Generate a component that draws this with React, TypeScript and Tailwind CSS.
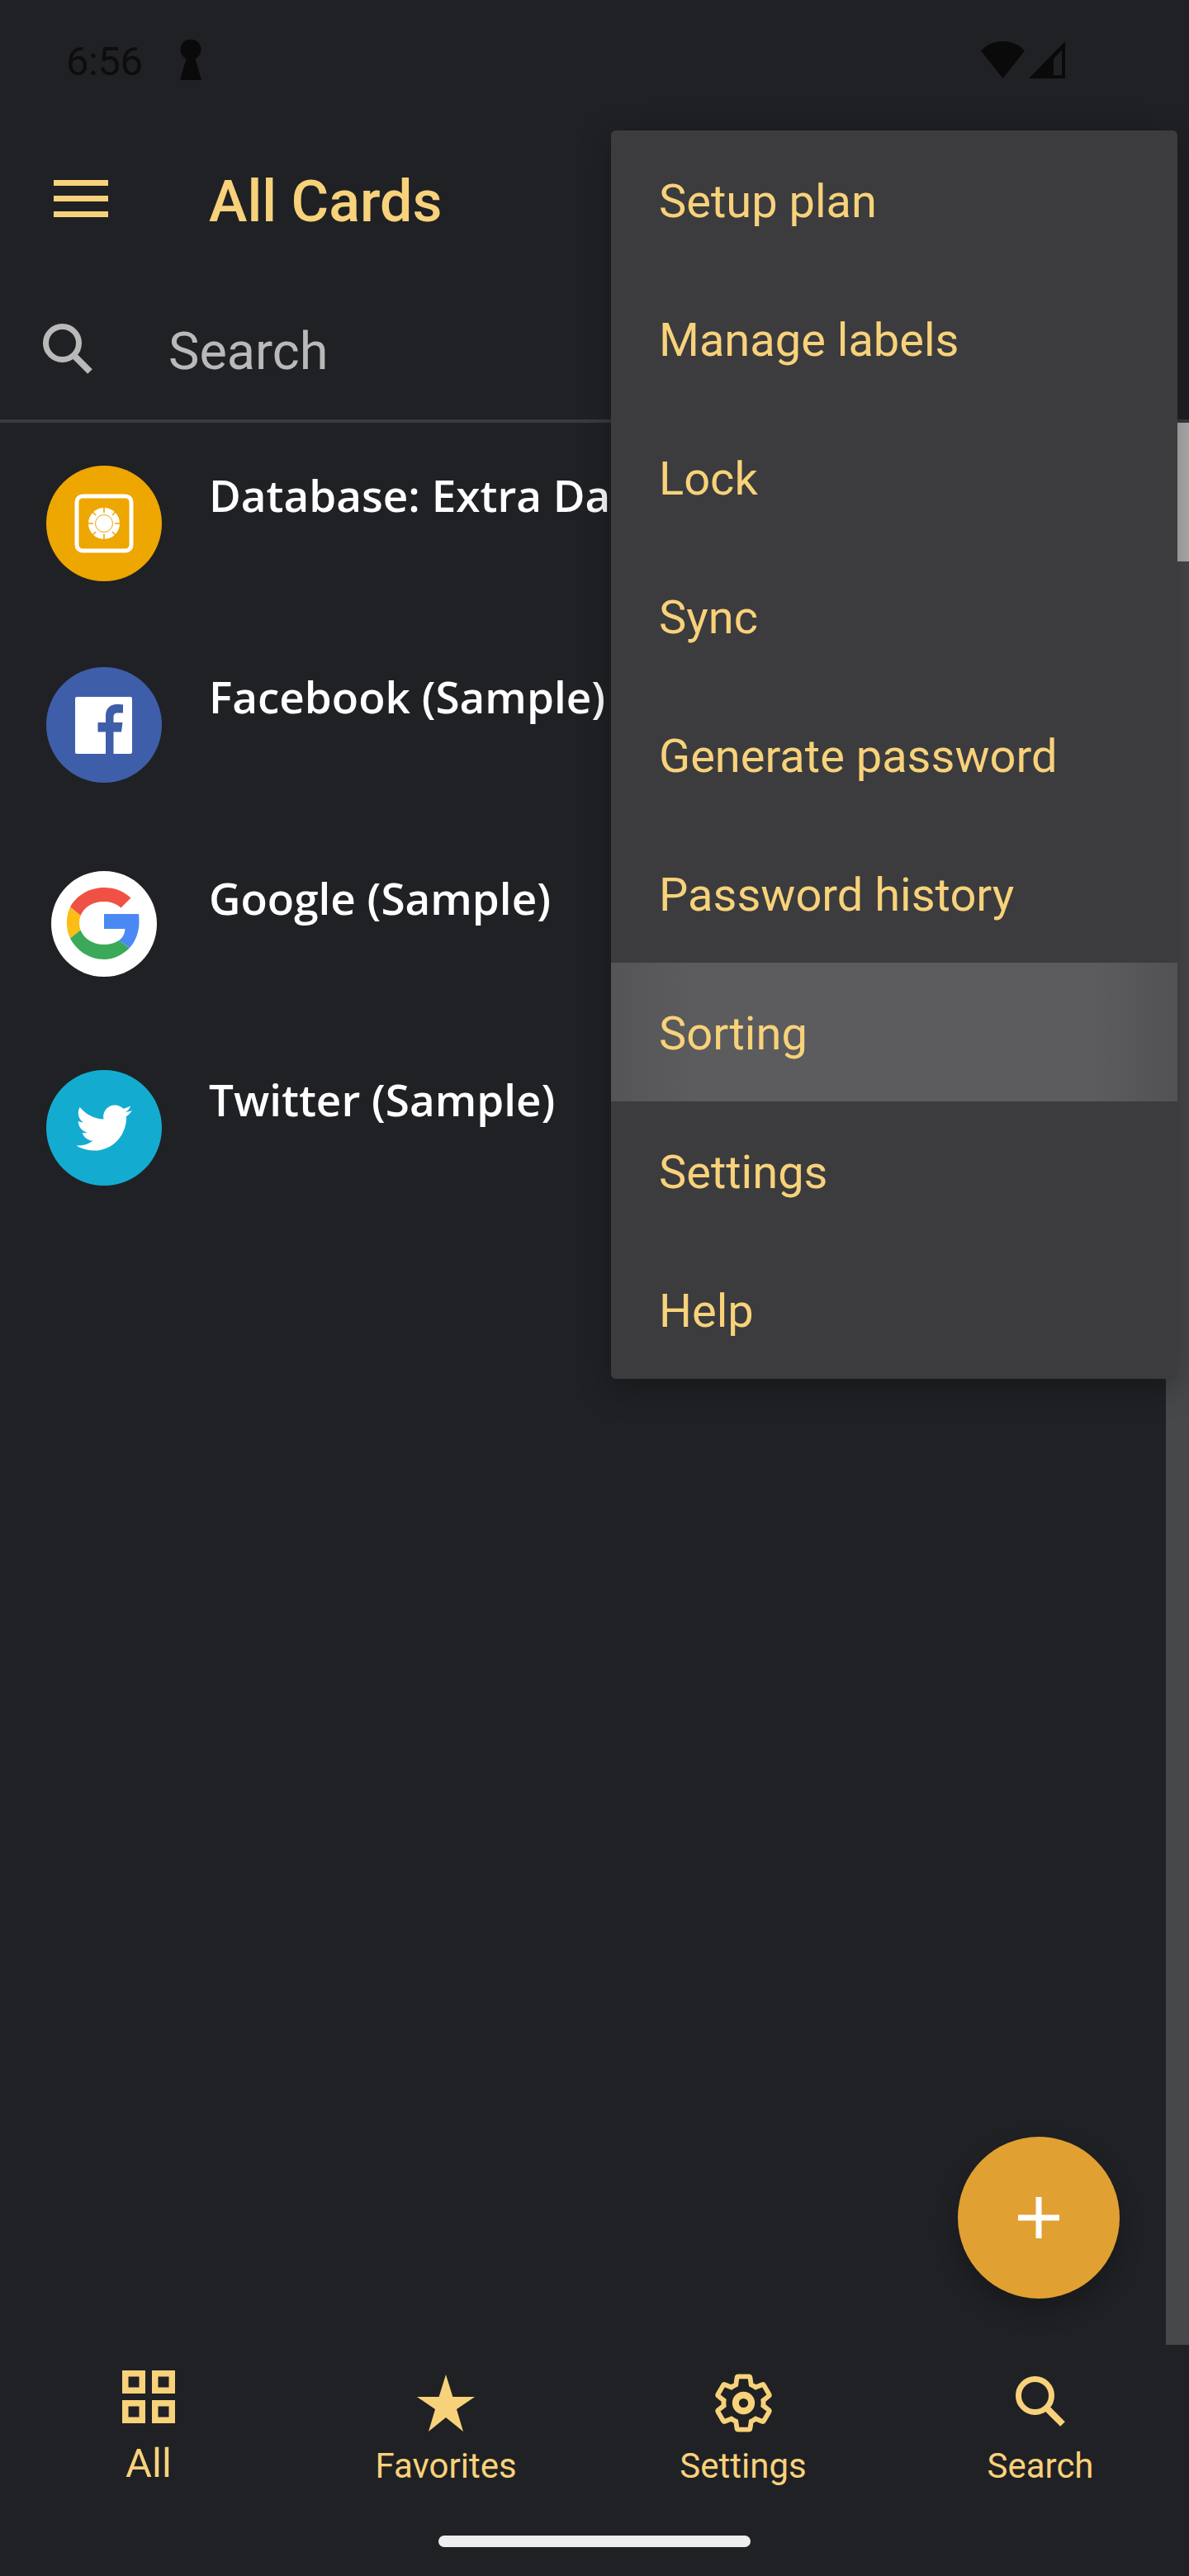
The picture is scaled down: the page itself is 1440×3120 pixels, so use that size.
import React from 'react';
import { FaTwitter } from 'react-icons/fa';

const GOLD = '#f8d27a';

const MENU_ITEMS = [
  'Setup plan',
  'Manage labels',
  'Lock',
  'Sync',
  'Generate password',
  'Password history',
  'Sorting',
  'Settings',
  'Help',
];

function SearchGlyph({ color, className }: { color: string; className: string }) {
  return (
    <svg viewBox="0 0 61 61" className={className} fill="none" stroke={color}>
      <circle cx="23.5" cy="23.5" r="20" strokeWidth="7" />
      <path d="M37 38 L57 58" strokeWidth="8" />
    </svg>
  );
}

function VaultIcon() {
  return (
    <svg viewBox="0 0 140 140" className="w-full h-full">
      <rect x="37" y="37" width="66" height="66" rx="7" fill="none" stroke="#fff" strokeWidth="5" />
      <circle cx="70" cy="70" r="19" fill="#fff" />
      <circle cx="70" cy="70" r="10.5" fill="#fff" stroke="#eea600" strokeWidth="1" />
      <path
        d="M70 50v7M70 83v7M50 70h7M83 70h7M56 56l4 4M84 56l-4 4M56 84l4-4M84 84l-4-4"
        stroke="#eea600"
        strokeWidth="1.6"
      />
    </svg>
  );
}

function FacebookIcon() {
  return (
    <svg viewBox="0 0 140 140" className="w-full h-full">
      <rect x="35" y="36" width="69" height="69" rx="2" fill="#fff" />
      <path
        d="M72 105V78.5H62.5V67H72V59C72 50 77.5 45 85.5 45C89 45 92 45.3 93 45.5V55.5H87C82.5 55.5 81.5 57.5 81.5 61V67H92.5L91 78.5H81.5V105Z"
        fill="#3f5ea9"
      />
    </svg>
  );
}

function GoogleIcon() {
  return (
    <svg viewBox="0 0 128 128" className="w-full h-full">
      <g transform="translate(9 8)">
        <path d="M26.5 46L14 35.5C22 21 38 12 55 12C68 12 79 16.5 87.5 24.5L75.5 36.5C70 31.5 63 29 55 29C41 29 30.5 36 26.5 46Z" fill="#ef5244" />
        <path d="M14 35.5L26.5 46C24.5 52 24.5 58 26.5 63.5L14 73.5C8.5 61.5 8.5 47.5 14 35.5Z" fill="#fcbd15" />
        <path d="M14 73.5L26.5 63.5C30.5 73.5 41 81 55 81C62 81 68 79.5 73 76L86 85C78 93 67.5 99 55 99C37 99 21.5 88 14 73.5Z" fill="#3aaa5a" />
        <path d="M55 44H97C97.5 47 97.5 50 97.5 54C97.5 66 93 77.5 86 85L73 76C77.5 73 80 68.5 80.5 62H55Z" fill="#4a89f3" />
      </g>
    </svg>
  );
}

function CardRow({ icon, title, avatarClass }: { icon: React.ReactNode; title: string; avatarClass: string }) {
  return (
    <div className="flex h-[244px]">
      <div className="w-[253px] flex shrink-0 justify-center pr-[1px]">
        <div className={`rounded-full overflow-hidden flex items-center justify-center ${avatarClass}`}>{icon}</div>
      </div>
      <div className="font-['Open_Sans',sans-serif] font-semibold text-[53px] leading-[72px] text-white whitespace-nowrap">
        {title}
      </div>
    </div>
  );
}

function NavItem({ label, icon, className, labelClass }: { label: string; icon: React.ReactNode; className: string; labelClass: string }) {
  return (
    <div className={`flex flex-col items-center ${className}`}>
      <div className="h-[90px] flex items-center justify-center">{icon}</div>
      <span className={labelClass}>{label}</span>
    </div>
  );
}

export default function App() {
  return (
    <div className="relative w-[1440px] h-[3120px] overflow-hidden bg-[#202125] flex flex-col font-['Roboto',sans-serif]">
      {/* status bar */}
      <div className="h-[146px] shrink-0 flex items-center pl-[80px] pr-[150px] pb-[2px] text-[#0d0d0e]">
        <span className="text-[49px] leading-none tracking-[-0.5px] mt-[4px]">6:56</span>
        <svg viewBox="0 0 26 49" className="w-[26px] h-[49px] ml-[46px]" fill="#0a0a0a">
          <circle cx="13" cy="12" r="12.5" />
          <path d="M9 18H17L26 49H0Z" />
        </svg>
        <div className="ml-auto flex items-center gap-[5px]">
          <svg viewBox="0 0 53 45" className="w-[53px] h-[45px]" fill="#0a0a0a">
            <path d="M0 11.5C7 4 16 0 26.5 0S46 4 53 11.5L26.5 45Z" />
          </svg>
          <svg viewBox="0 0 44 45" className="w-[44px] h-[45px]" fill="#0a0a0a" fillRule="evenodd">
            <path d="M44 0V45H0ZM40 11L30 21V41H40Z" />
          </svg>
        </div>
      </div>

      {/* toolbar */}
      <div className="h-[196px] shrink-0 flex items-center">
        <div className="w-[253px] pl-[65px] pb-[7px] shrink-0 flex flex-col gap-[12px]">
          <div className="w-[66px] h-[7px] bg-[#f8d27a]" />
          <div className="w-[66px] h-[7px] bg-[#f8d27a]" />
          <div className="w-[66px] h-[7px] bg-[#f8d27a]" />
        </div>
        <h1 className="text-[70px] leading-none font-medium text-[#f8d27a]">All Cards</h1>
      </div>

      {/* search */}
      <div className="h-[170px] shrink-0 flex items-center border-b-[4px] border-[#3a3b3e]">
        <div className="w-[204px] pl-[52px] pb-[6px] shrink-0">
          <SearchGlyph color="#b9b9ba" className="w-[61px] h-[61px]" />
        </div>
        <span className="text-[63px] leading-none text-[#b9b9ba]">Search</span>
      </div>

      {/* cards */}
      <div className="flex-1 flex flex-col pt-[52px]">
        <CardRow icon={<VaultIcon />} title="Database: Extra Data" avatarClass="w-[140px] h-[140px] bg-[#eea600]" />
        <CardRow icon={<FacebookIcon />} title="Facebook (Sample)" avatarClass="w-[140px] h-[140px] bg-[#3f5ea9]" />
        <CardRow icon={<GoogleIcon />} title="Google (Sample)" avatarClass="w-[128px] h-[128px] mt-[3px] bg-white" />
        <CardRow icon={<FaTwitter className="w-[68px] h-[68px] text-white" />} title="Twitter (Sample)" avatarClass="w-[140px] h-[140px] bg-[#13acd0]" />
      </div>

      {/* bottom navigation */}
      <div className="h-[270px] shrink-0 grid grid-cols-4 text-[#f8d27a]">
        <NavItem
          label="All"
          className="pt-[8px]"
          labelClass="text-[49px] leading-[50px] mt-[11px]"
          icon={
            <svg viewBox="0 0 64 64" className="w-[64px] h-[64px]" fill="none" stroke={GOLD} strokeWidth="7.5">
              <rect x="3.75" y="3.75" width="20.5" height="20.5" />
              <rect x="39.75" y="3.75" width="20.5" height="20.5" />
              <rect x="3.75" y="39.75" width="20.5" height="20.5" />
              <rect x="39.75" y="39.75" width="20.5" height="20.5" />
            </svg>
          }
        />
        <NavItem
          label="Favorites"
          className="pt-[15px]"
          labelClass="text-[42px] leading-[50px] mt-[7px]"
          icon={
            <svg viewBox="0 0 70 69" className="w-[70px] h-[69px]" fill={GOLD}>
              <path d="M35 0L43.4 27H70L48 42L56 69L35 52L14 69L22 42L0 27H26.6Z" />
            </svg>
          }
        />
        <NavItem
          label="Settings"
          className="pt-[15px]"
          labelClass="text-[42px] leading-[50px] mt-[7px]"
          icon={
            <svg viewBox="0 0 24 24" className="w-[77px] h-[77px]" fill="none" stroke={GOLD}>
              <path
                d="M19.43 12.98c.04-.32.07-.64.07-.98 0-.34-.03-.66-.07-.98l2.11-1.65c.19-.15.24-.42.12-.64l-2-3.46c-.12-.22-.39-.3-.61-.22l-2.49 1c-.52-.4-1.08-.73-1.69-.98l-.38-2.65C14.46 2.18 14.25 2 14 2h-4c-.25 0-.46.18-.49.42l-.38 2.65c-.61.25-1.17.59-1.69.98l-2.49-1c-.23-.09-.49 0-.61.22l-2 3.46c-.13.22-.07.49.12.64l2.11 1.65c-.04.32-.07.65-.07.98 0 .33.03.66.07.98l-2.11 1.65c-.19.15-.24.42-.12.64l2 3.46c.12.22.39.3.61.22l2.49-1c.52.4 1.08.73 1.69.98l.38 2.65c.03.24.24.42.49.42h4c.25 0 .46-.18.49-.42l.38-2.65c.61-.25 1.17-.59 1.69-.98l2.49 1c.23.09.49 0 .61-.22l2-3.46c.12-.22.07-.49-.12-.64l-2.11-1.65z"
                strokeWidth="1.8"
              />
              <circle cx="12" cy="12" r="3" strokeWidth="2.5" />
            </svg>
          }
        />
        <NavItem
          label="Search"
          className="pt-[13px]"
          labelClass="text-[42px] leading-[50px] mt-[9px]"
          icon={<SearchGlyph color={GOLD} className="w-[61px] h-[61px]" />}
        />
      </div>

      {/* home indicator */}
      <div className="absolute left-[531px] top-[3071px] w-[378px] h-[14px] rounded-full bg-[#eeeeee]" />

      {/* scrollbar */}
      <div className="absolute left-[1412px] top-[512px] w-[28px] h-[2328px] bg-[#47484a]">
        <div className="w-full h-[168px] bg-[#b0b0b0]" />
      </div>

      {/* add button */}
      <div className="absolute left-[1160px] top-[2588px] w-[196px] h-[196px] rounded-full bg-[#e1a032] shadow-[0_14px_28px_rgba(0,0,0,0.25)] flex items-center justify-center">
        <svg viewBox="0 0 50 50" className="w-[50px] h-[50px]" fill="#fff">
          <rect x="21.5" y="0" width="7" height="50" />
          <rect x="0" y="21.5" width="50" height="7" />
        </svg>
      </div>

      {/* overflow menu */}
      <div className="absolute left-[740px] top-[158px] w-[686px] rounded-[6px] overflow-hidden bg-[#3c3c3e] shadow-[0_10px_40px_rgba(0,0,0,0.3)]">
        {MENU_ITEMS.map((item) => (
          <div
            key={item}
            className={`h-[168px] flex items-center pl-[58px] pt-[4px] text-[56px] leading-none text-[#f8d27a] ${
              item === 'Sorting' ? 'bg-[linear-gradient(90deg,#555557,#5c5c5e_15%,#5c5c5e_85%,#525254)]' : ''
            }`}
          >
            {item}
          </div>
        ))}
      </div>
    </div>
  );
}
